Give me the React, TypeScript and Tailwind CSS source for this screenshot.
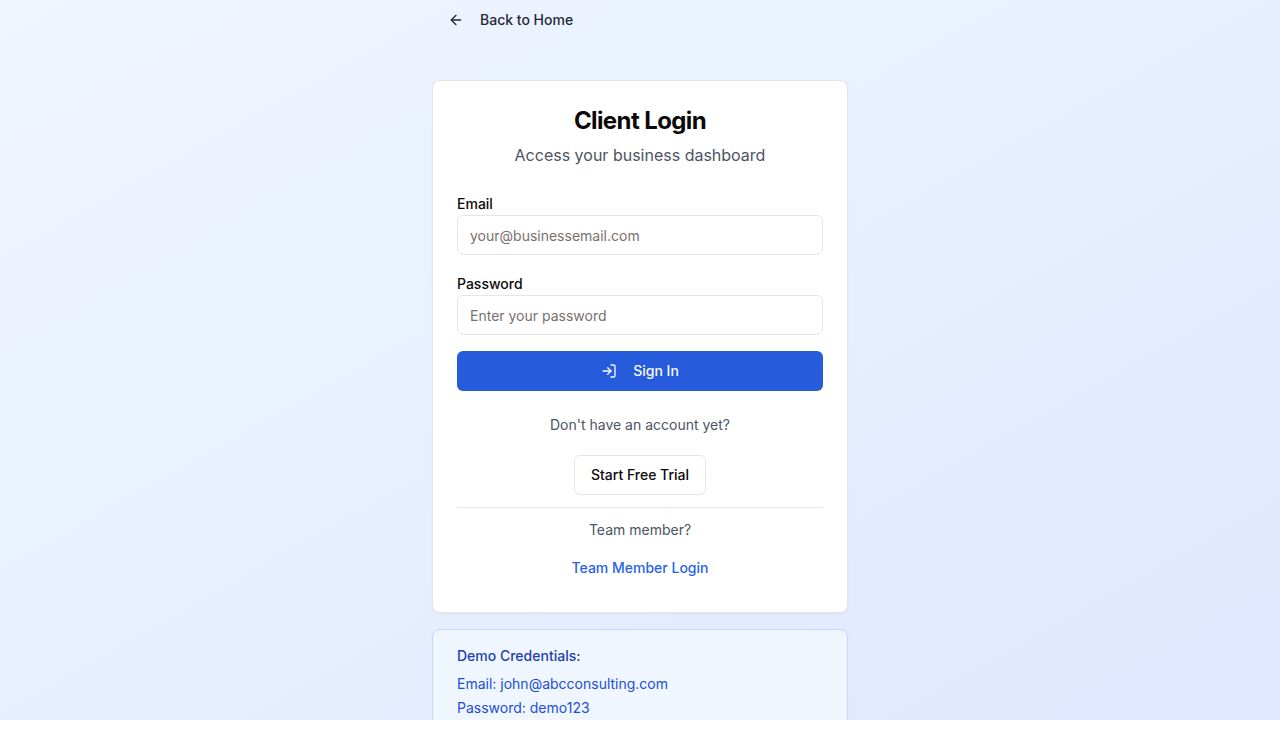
import { ArrowLeft, LogIn } from "lucide-react";

const inputClass =
  "block h-10 w-full rounded-md border border-[#e7e5e4] bg-white px-3 py-2 text-sm leading-5 text-[#0c0a09] placeholder:text-[#78716c] outline-none";

function Field({ id, label, type, placeholder }: { id: string; label: string; type: string; placeholder: string }) {
  return (
    <div className="h-16">
      <label htmlFor={id} className="block h-6 pt-[3px] text-sm leading-5 font-medium">
        {label}
      </label>
      <input id={id} type={type} placeholder={placeholder} className={inputClass} />
    </div>
  );
}

export default function App() {
  return (
    <div className="h-[743px] overflow-hidden bg-white font-['Inter',sans-serif] text-[#0c0a09]">
      <div className="flex h-[720px] justify-center overflow-hidden bg-[linear-gradient(to_bottom_right,#eff6ff,#e0e7ff)]">
        <div className="flex w-[416px] shrink-0 flex-col">
          <a href="#" className="flex h-10 shrink-0 items-center gap-4 self-start px-4 text-sm font-medium text-[#1f2937]">
            <ArrowLeft size={16} />
            Back to Home
          </a>

          <div className="mt-10 h-[533px] shrink-0 rounded-lg border border-[#e7e5e4] bg-white px-6 pt-6 shadow-[0_1px_2px_0_rgb(0_0_0/0.05)]">
            <h1 className="text-center text-2xl leading-8 font-bold tracking-tight">Client Login</h1>
            <p className="mt-1.5 text-center text-base leading-6 text-[#4b5563]">Access your business dashboard</p>
            <form className="mt-6 space-y-4" onSubmit={(e) => e.preventDefault()}>
              <Field id="email" label="Email" type="email" placeholder="your@businessemail.com" />
              <Field id="password" label="Password" type="password" placeholder="Enter your password" />
              <button className="flex h-10 w-full items-center justify-center gap-4 rounded-md bg-[#265cdb] text-sm font-medium text-[#f8fafc]">
                <LogIn size={16} />
                Sign In
              </button>
            </form>
            <div className="mt-6 flex flex-col items-center text-sm leading-5 text-[#4b5563]">
              <p>Don't have an account yet?</p>
              <button className="mt-5 h-10 rounded-md border border-[#e7e5e4] bg-white px-4 font-medium text-[#0c0a09]">
                Start Free Trial
              </button>
              <div className="mt-3 flex w-full flex-col items-center border-t border-[#e5e5e5] pt-3">
                <p>Team member?</p>
                <a href="#" className="mt-[18px] font-medium text-[#2563eb]">
                  Team Member Login
                </a>
              </div>
            </div>
          </div>

          <div className="mt-4 h-[120px] shrink-0 rounded-lg border border-[#bfdbfe] bg-[#eff6ff] px-6 pt-4 text-sm text-[#1d4ed8] shadow-[0_1px_2px_0_rgb(0_0_0/0.05)]">
            <h3 className="leading-5 font-medium text-[#1e40af]">Demo Credentials:</h3>
            <p className="mt-2 leading-5">Email: john@abcconsulting.com</p>
            <p className="mt-1 leading-5">Password: demo123</p>
          </div>
        </div>
      </div>
    </div>
  );
}
